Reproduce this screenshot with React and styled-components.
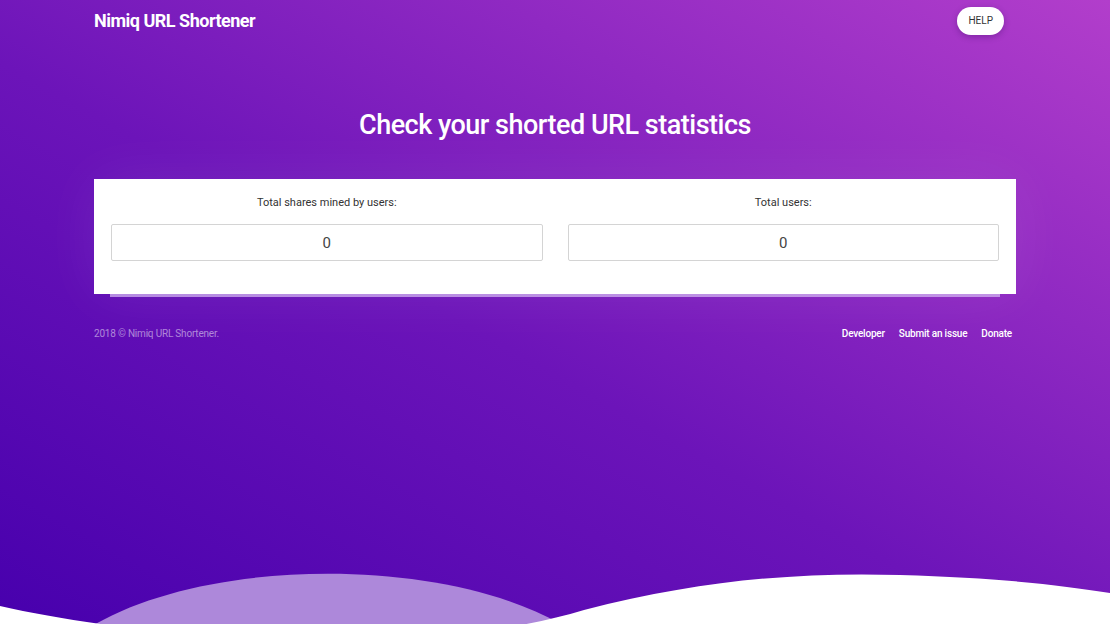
import React from "react";
import styled, { createGlobalStyle } from "styled-components";

const GlobalStyle = createGlobalStyle`
  html, body {
    margin: 0;
    padding: 0;
    height: 100%;
  }
  body {
    font-family: Roboto, "Liberation Sans", sans-serif;
    overflow: hidden;
  }
`;

const Page = styled.div`
  position: relative;
  width: 100%;
  height: 624px;
  overflow: hidden;
  background: linear-gradient(to top right, #4700ad 0%, #6c14b9 45%, #b23ecb 100%);
`;

const Container = styled.div`
  width: 922px;
  margin: 0 auto;
`;

const Header = styled.header`
  display: flex;
  justify-content: space-between;
  align-items: center;
  height: 42px;
  padding-right: 12px;
`;

const Brand = styled.a`
  color: #fff;
  font-size: 18px;
  font-weight: 700;
  letter-spacing: -0.5px;
  text-decoration: none;
  margin-top: -2px;
`;

const HelpButton = styled.button`
  height: 28px;
  padding: 0 11px;
  border: none;
  border-radius: 14px;
  background: #fff;
  color: #333;
  font-family: inherit;
  font-size: 10px;
  font-weight: 400;
  box-shadow: 0 2px 6px rgba(40, 0, 80, 0.3);
  margin-top: -1px;
`;

const Heading = styled.h1`
  margin: 67px 0 0;
  color: #fff;
  font-size: 27px;
  font-weight: 500;
  text-align: center;
  letter-spacing: -0.5px;
`;

const Card = styled.section`
  margin-top: 38px;
  background: #fff;
  padding: 16px 17px 33px;
  display: grid;
  grid-template-columns: 1fr 1fr;
  column-gap: 25px;
  box-shadow: 0 19px 0 -16px rgba(210, 180, 240, 0.75),
    0 0 60px rgba(255, 255, 255, 0.08);
`;

const Field = styled.div`
  display: flex;
  flex-direction: column;
  align-items: center;
`;

const Label = styled.label`
  color: #333;
  font-size: 11px;
  line-height: 16px;
  margin-bottom: 13px;
`;

const ValueBox = styled.div`
  box-sizing: border-box;
  width: 100%;
  height: 37px;
  border: 1px solid #d4d4d4;
  border-radius: 2px;
  display: flex;
  align-items: center;
  justify-content: center;
  color: #444;
  font-size: 15px;
`;

const Footer = styled.footer`
  display: flex;
  justify-content: space-between;
  align-items: center;
  margin-top: 34px;
  padding-right: 4px;
  font-size: 10px;
`;

const Copyright = styled.span`
  color: rgba(255, 255, 255, 0.5);
  letter-spacing: -0.2px;
`;

const Links = styled.nav`
  display: flex;
  gap: 14px;
`;

const FooterLink = styled.a`
  color: #fff;
  font-weight: 500;
  letter-spacing: -0.2px;
  text-decoration: none;
`;

const Waves = styled.svg`
  position: absolute;
  left: 0;
  bottom: 0;
  width: 100%;
  height: 84px;
  display: block;
`;

const stats = [
  { label: "Total shares mined by users:", value: 0 },
  { label: "Total users:", value: 0 },
];

export default function App() {
  return (
    <Page>
      <GlobalStyle />
      <Container>
        <Header>
          <Brand href="#">Nimiq URL Shortener</Brand>
          <HelpButton>HELP</HelpButton>
        </Header>
        <Heading>Check your shorted URL statistics</Heading>
        <Card>
          {stats.map((s) => (
            <Field key={s.label}>
              <Label>{s.label}</Label>
              <ValueBox>{s.value}</ValueBox>
            </Field>
          ))}
        </Card>
        <Footer>
          <Copyright>2018 © Nimiq URL Shortener.</Copyright>
          <Links>
            <FooterLink href="#">Developer</FooterLink>
            <FooterLink href="#">Submit an issue</FooterLink>
            <FooterLink href="#">Donate</FooterLink>
          </Links>
        </Footer>
      </Container>
      <Waves viewBox="0 540 1110 84" preserveAspectRatio="none">
        <path d="M50,660 C150,545 506,545 606,660 Z" fill="#ad88da" />
        <path
          d="M0,606 C150,640 420,660 584,610 C700,580 800,572 900,575 C1000,578 1060,585 1110,593 L1110,624 L0,624 Z"
          fill="#ffffff"
        />
      </Waves>
    </Page>
  );
}
